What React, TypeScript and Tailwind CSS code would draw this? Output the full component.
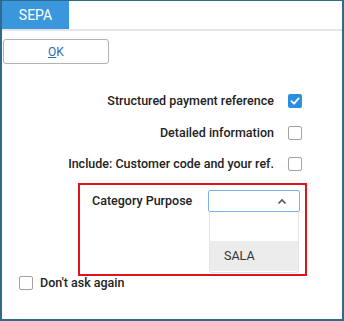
import React from "react";

function Box({ checked }: { checked?: boolean }) {
  if (checked) {
    return (
      <div className="w-[14px] h-[14px] rounded-[2px] bg-[#2b8ee0] flex items-center justify-center shrink-0">
        <svg width="10" height="10" viewBox="0 0 10 10">
          <path d="M1.5 5.2 L4 7.6 L8.6 2.4" fill="none" stroke="white" strokeWidth="1.8" strokeLinecap="round" strokeLinejoin="round" />
        </svg>
      </div>
    );
  }
  return <div className="w-[14px] h-[14px] rounded-[2px] border-[1.5px] border-[#a3a3a3] bg-white shrink-0" />;
}

function Row({ label, checked, mt }: { label: string; checked?: boolean; mt: string }) {
  return (
    <div className={`flex items-center h-[20px] ${mt}`}>
      <div className="w-[272px] text-right whitespace-nowrap">{label}</div>
      <div className="ml-[14px]">
        <Box checked={checked} />
      </div>
    </div>
  );
}

export default function App() {
  return (
    <div
      className="w-[344px] h-[321px] bg-white border-l-2 border-t border-r-2 border-b-2 border-[#2d6a8b] text-[12.5px] font-medium text-[#222] overflow-hidden"
      style={{ fontFamily: 'Roboto, "Liberation Sans", Arial, sans-serif' }}
    >
      <div className="h-[30px] flex border-b-2 border-[#e6e6e6]">
        <div className="w-[67px] h-[28px] bg-[#3b97dd] text-white text-[14px] font-normal flex items-center justify-center">SEPA</div>
      </div>
      <button className="ml-[1px] mt-[8px] w-[106px] h-[25px] border border-[#b3b3b3] rounded-[3px] bg-white text-[#2a6db3] text-[12px] font-normal flex items-center justify-center">
        <span className="underline">O</span>K
      </button>
      <Row label="Structured payment reference" checked mt="mt-[27px]" />
      <Row label="Detailed information" mt="mt-[12px]" />
      <Row label="Include: Customer code and your ref." mt="mt-[11px]" />
      <div className="ml-[76px] mt-[9px] w-[229px] h-[93px] border-2 border-[#e3111b] flex pl-[12px] pt-[5px]">
        <div className="w-[116px] pt-[2px] whitespace-nowrap">Category Purpose</div>
        <div className="flex flex-col w-[92px]">
          <div className="h-[22px] border border-[#7db6e6] rounded-[2px] flex items-center justify-end pr-[12px]">
            <svg width="10" height="7" viewBox="0 0 10 7">
              <path d="M1.5 5.5 L5 2 L8.5 5.5" fill="none" stroke="#555" strokeWidth="1.6" />
            </svg>
          </div>
          <div className="mx-[1px] h-[61px] border border-t-0 border-[#e4e4e4] rounded-b-[3px] flex flex-col bg-white">
            <div className="h-[29px]" />
            <div className="h-[30px] bg-[#ececec] flex items-center pl-[14px] text-[#333] font-normal">SALA</div>
          </div>
        </div>
      </div>
      <div className="flex items-center ml-[17px] mt-0 h-[14px]">
        <Box />
        <span className="ml-[7px]">Don't ask again</span>
      </div>
    </div>
  );
}
